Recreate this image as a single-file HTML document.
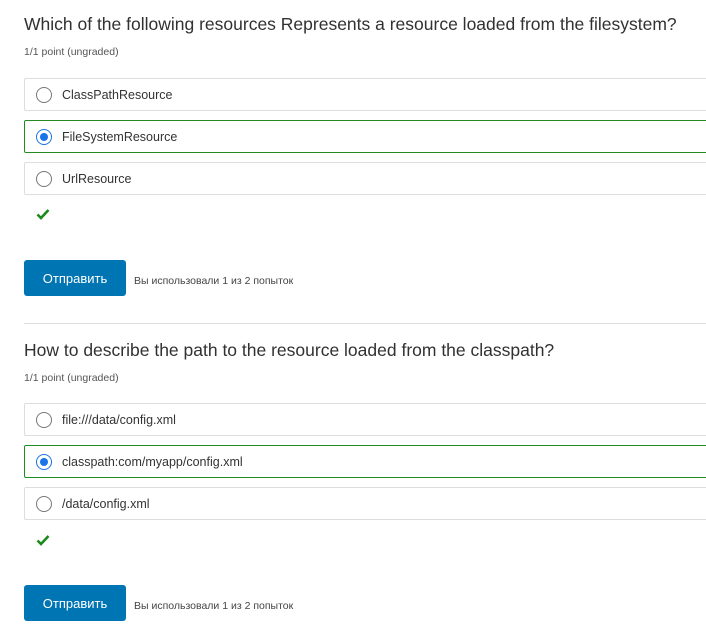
<!DOCTYPE html>
<html><head><meta charset="utf-8"><style>
body{margin:0;width:706px;height:636px;background:#fff;font-family:"Liberation Sans","DejaVu Sans",sans-serif;color:#333;position:relative;overflow:hidden}
.a{position:absolute}
.t{left:24px;font-size:17.5px;color:#313131;white-space:nowrap}
.p{left:24px;font-size:10.5px;color:#555}
.o{left:24px;width:690px;height:31px;border:1px solid #ddd;border-radius:2px;box-sizing:content-box}
.o.s{border-color:#228b22}
.o .r{position:absolute;left:11px;top:8px;width:14px;height:14px;border:1px solid #777;border-radius:50%;background:#fff}
.o.s .r{border-color:#1a73e8}
.o.s .r:after{content:"";position:absolute;left:3px;top:3px;width:8px;height:8px;border-radius:50%;background:#1a73e8}
.o span{position:absolute;left:37px;top:9px;font-size:12.5px;color:#333}
.b{left:24px;width:102px;height:36px;background:#0075b4;border-radius:3px;color:#fff;font-size:13px;text-align:center;line-height:38px}
.n{left:134px;font-size:10.5px;color:#444}
.hr{left:24px;width:682px;height:1px;background:#ddd}
</style></head><body>
<div class="a t" style="top:14px">Which of the following resources Represents a resource loaded from the filesystem?</div>
<div class="a p" style="top:46px">1/1 point (ungraded)</div>
<div class="a o" style="top:78px"><i class="r"></i><span>ClassPathResource</span></div>
<div class="a o s" style="top:120px"><i class="r"></i><span>FileSystemResource</span></div>
<div class="a o" style="top:162px"><i class="r"></i><span>UrlResource</span></div>
<svg class="a" style="left:36px;top:208px" width="14" height="12"><path d="M1.5 6.5L5 10L12.5 2" stroke="#1a8a1a" stroke-width="2.6" fill="none"/></svg>
<div class="a b" style="top:260px">Отправить</div>
<div class="a n" style="top:275px">Вы использовали 1 из 2 попыток</div>
<div class="a hr" style="top:323px"></div>
<div class="a t" style="top:340px">How to describe the path to the resource loaded from the classpath?</div>
<div class="a p" style="top:372px">1/1 point (ungraded)</div>
<div class="a o" style="top:403px"><i class="r"></i><span>file:///data/config.xml</span></div>
<div class="a o s" style="top:445px"><i class="r"></i><span>classpath:com/myapp/config.xml</span></div>
<div class="a o" style="top:487px"><i class="r"></i><span>/data/config.xml</span></div>
<svg class="a" style="left:36px;top:534px" width="14" height="12"><path d="M1.5 6.5L5 10L12.5 2" stroke="#1a8a1a" stroke-width="2.6" fill="none"/></svg>
<div class="a b" style="top:585px">Отправить</div>
<div class="a n" style="top:600px">Вы использовали 1 из 2 попыток</div>
</body></html>
